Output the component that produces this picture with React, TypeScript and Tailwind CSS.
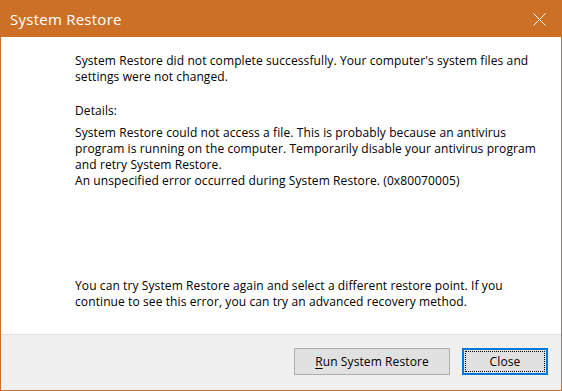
import React from 'react';

const FONT = "font-['Open_Sans','Noto_Sans',sans-serif]";

const CloseIcon: React.FC = () => (
  <svg width="13" height="13" viewBox="0 0 13 13" className="block">
    <path d="M0.5 0.5 L12.5 12.5 M12.5 0.5 L0.5 12.5" stroke="#ffffff" strokeWidth="1" fill="none" />
  </svg>
);

const App: React.FC = () => {
  const intro = [
    "System Restore did not complete successfully. Your computer's system files and",
    'settings were not changed.',
  ];
  const details = [
    'System Restore could not access a file. This is probably because an antivirus',
    'program is running on the computer. Temporarily disable your antivirus program',
    'and retry System Restore.',
    'An unspecified error occurred during System Restore. (0x80070005)',
  ];
  const hint = [
    'You can try System Restore again and select a different restore point. If you',
    'continue to see this error, you can try an advanced recovery method.',
  ];

  return (
    <div className={`w-[562px] h-[391px] flex flex-col border border-[#cc7028] bg-white text-black ${FONT}`}>
      {/* title bar */}
      <div className="h-[36px] shrink-0 bg-[#cc7028] flex items-center justify-between pl-[9px] pr-[15px]">
        <span className="text-[15px] leading-[20px] text-white tracking-[0.25px]">System Restore</span>
        <CloseIcon />
      </div>

      {/* body */}
      <div className="flex-1 flex flex-col pl-[74px] pt-[16px] pb-[24px] text-[12px] leading-[16px] tracking-[0.1px]">
        <div>
          {intro.map(l => <div key={l} className="whitespace-nowrap">{l}</div>)}
        </div>
        <div className="mt-[18px]">Details:</div>
        <div className="mt-[6px]">
          {details.map(l => <div key={l} className="whitespace-nowrap">{l}</div>)}
        </div>
        <div className="mt-auto">
          {hint.map(l => <div key={l} className="whitespace-nowrap">{l}</div>)}
        </div>
      </div>

      {/* footer */}
      <div className="h-[56px] shrink-0 border-t border-[#dfdfdf] bg-[#f0f0f0] flex justify-end items-start gap-[12px] pt-[13px] pr-[13px] text-[12px] tracking-[0.1px]">
        <button type="button" className="w-[156px] h-[27px] bg-[#e1e1e1] border border-[#adadad] flex items-center justify-center">
          <span><span className="underline underline-offset-2">R</span>un System Restore</span>
        </button>
        <button type="button" className="w-[86px] h-[27px] bg-[#e1e1e1] border-2 border-[#0078d7] p-[1px]">
          <span className="w-full h-full flex items-center justify-center border border-dotted border-black">Close</span>
        </button>
      </div>
    </div>
  );
};

export default App;
